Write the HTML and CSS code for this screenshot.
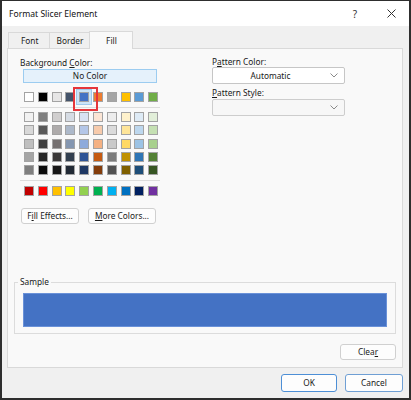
FILE: index.html
```html
<!DOCTYPE html>
<html lang="en">
<head>
  <meta charset="UTF-8" />
  <title>Format Slicer Element</title>
  <link rel="stylesheet" href="styles.css">
</head>
<body>

<div class="window">
  <div class="titlebar">
    <span class="title">Format Slicer Element</span>
    <span class="tb-btn">?</span>
    <span class="tb-btn">
      <svg width="9" height="9" viewBox="0 0 9 9"><path d="M0.5 0.5L8.5 8.5M8.5 0.5L0.5 8.5" stroke="#333" stroke-width="1"/></svg>
    </span>
  </div>

  <div class="body">
    <div class="tabs">
      <div class="tab">Font</div>
      <div class="tab">Border</div>
      <div class="tab active">Fill</div>
    </div>

    <div class="panel">
      <div class="top">
        <div class="col-left">
          <div class="label">Background <u>C</u>olor:</div>
          <div class="no-color">No Color</div>

          <div class="swatch-row theme">
            <span class="sw" style="background:#ffffff"></span>
            <span class="sw" style="background:#000000"></span>
            <span class="sw" style="background:#e7e6e6"></span>
            <span class="sw" style="background:#44546a"></span>
            <span class="sw selected" style="background:#4472c4"></span>
            <span class="sw" style="background:#ed7d31"></span>
            <span class="sw" style="background:#a5a5a5"></span>
            <span class="sw" style="background:#ffc000"></span>
            <span class="sw" style="background:#5b9bd5"></span>
            <span class="sw" style="background:#70ad47"></span>
          </div>
          <div class="sep"></div>

          <div class="swatch-grid">
            <span class="sw" style="background:#f2f2f2"></span>
            <span class="sw" style="background:#7f7f7f"></span>
            <span class="sw" style="background:#d0cece"></span>
            <span class="sw" style="background:#d6dce4"></span>
            <span class="sw" style="background:#d9e2f3"></span>
            <span class="sw" style="background:#fbe5d5"></span>
            <span class="sw" style="background:#ededed"></span>
            <span class="sw" style="background:#fff2cc"></span>
            <span class="sw" style="background:#deebf6"></span>
            <span class="sw" style="background:#e2efd9"></span>

            <span class="sw" style="background:#d8d8d8"></span>
            <span class="sw" style="background:#595959"></span>
            <span class="sw" style="background:#aeabab"></span>
            <span class="sw" style="background:#adb9ca"></span>
            <span class="sw" style="background:#b4c6e7"></span>
            <span class="sw" style="background:#f7cbac"></span>
            <span class="sw" style="background:#dbdbdb"></span>
            <span class="sw" style="background:#fee599"></span>
            <span class="sw" style="background:#bdd7ee"></span>
            <span class="sw" style="background:#c5e0b3"></span>

            <span class="sw" style="background:#bfbfbf"></span>
            <span class="sw" style="background:#3f3f3f"></span>
            <span class="sw" style="background:#757070"></span>
            <span class="sw" style="background:#8496b0"></span>
            <span class="sw" style="background:#8eaadb"></span>
            <span class="sw" style="background:#f4b183"></span>
            <span class="sw" style="background:#c9c9c9"></span>
            <span class="sw" style="background:#ffd965"></span>
            <span class="sw" style="background:#9cc3e5"></span>
            <span class="sw" style="background:#a8d08d"></span>

            <span class="sw" style="background:#a5a5a5"></span>
            <span class="sw" style="background:#262626"></span>
            <span class="sw" style="background:#3a3838"></span>
            <span class="sw" style="background:#323f4f"></span>
            <span class="sw" style="background:#2f5496"></span>
            <span class="sw" style="background:#c55a11"></span>
            <span class="sw" style="background:#7b7b7b"></span>
            <span class="sw" style="background:#bf9000"></span>
            <span class="sw" style="background:#2e75b5"></span>
            <span class="sw" style="background:#538135"></span>

            <span class="sw" style="background:#7f7f7f"></span>
            <span class="sw" style="background:#0c0c0c"></span>
            <span class="sw" style="background:#171616"></span>
            <span class="sw" style="background:#222a35"></span>
            <span class="sw" style="background:#1f3864"></span>
            <span class="sw" style="background:#833c0b"></span>
            <span class="sw" style="background:#525252"></span>
            <span class="sw" style="background:#7f6000"></span>
            <span class="sw" style="background:#1e4e79"></span>
            <span class="sw" style="background:#375623"></span>
          </div>
          <div class="sep"></div>

          <div class="swatch-row standard">
            <span class="sw" style="background:#c00000"></span>
            <span class="sw" style="background:#ff0000"></span>
            <span class="sw" style="background:#ffc000"></span>
            <span class="sw" style="background:#ffff00"></span>
            <span class="sw" style="background:#92d050"></span>
            <span class="sw" style="background:#00b050"></span>
            <span class="sw" style="background:#00b0f0"></span>
            <span class="sw" style="background:#0070c0"></span>
            <span class="sw" style="background:#002060"></span>
            <span class="sw" style="background:#7030a0"></span>
          </div>

          <div class="btn-row">
            <div class="btn fill-effects">F<u>i</u>ll Effects...</div>
            <div class="btn more-colors"><u>M</u>ore Colors...</div>
          </div>
        </div>

        <div class="col-right">
          <div class="label">P<u>a</u>ttern Color:</div>
          <div class="select">
            <span class="select-text">Automatic</span>
            <svg class="chev" width="8" height="5" viewBox="0 0 8 5"><path d="M0.5 0.5L4 4L7.5 0.5" fill="none" stroke="#8a8a8a" stroke-width="1"/></svg>
          </div>
          <div class="label second"><u>P</u>attern Style:</div>
          <div class="select empty">
            <span class="select-text"></span>
            <svg class="chev" width="8" height="5" viewBox="0 0 8 5"><path d="M0.5 0.5L4 4L7.5 0.5" fill="none" stroke="#8a8a8a" stroke-width="1"/></svg>
          </div>
        </div>
      </div>

      <div class="group">
        <div class="group-title">Sample</div>
        <div class="sample"></div>
      </div>

      <div class="btn clear">Clea<u>r</u></div>
    </div>

    <div class="footer">
      <div class="btn dlg ok">OK</div>
      <div class="btn dlg">Cancel</div>
    </div>
  </div>
</div>

</body>
</html>
```

FILE: styles.css
```css
* {
  box-sizing: border-box;
}

body {
  margin: 0;
  padding: 0;
  background: #fff;
  font-family: "Noto Sans", "Liberation Sans", sans-serif;
  font-size: 8.3px;
  color: #1a1a1a;
}

u {
  text-decoration-thickness: 1px;
  text-underline-offset: 1px;
}

.window {
  width: 411px;
  height: 400px;
  display: flex;
  flex-direction: column;
  border: 2px solid #2e2e2e;
  border-top-width: 1px;
  background: #f0f0f0;
}

.titlebar {
  height: 25px;
  flex: none;
  display: flex;
  align-items: center;
  padding: 0 6px 0 7px;
  background: #fff;
}

.title {
  flex: 1;
  font-size: 8.6px;
  color: #111;
}

.tb-btn {
  width: 24px;
  height: 25px;
  display: flex;
  align-items: center;
  justify-content: center;
  font-size: 10px;
  color: #333;
}

.tb-btn + .tb-btn {
  margin-left: 12px;
}

.body {
  flex: 1;
  display: flex;
  flex-direction: column;
  padding: 6px 6px 0 5px;
}

.tabs {
  display: flex;
  height: 16px;
  padding-left: 1px;
  position: relative;
  z-index: 1;
}

.tab {
  height: 16px;
  line-height: 15px;
  padding: 0 11px 0 12px;
  border: 1px solid #d9d9d9;
  border-bottom: none;
  border-right: none;
  background: #f0f0f0;
  color: #1a1a1a;
}

.tab:nth-child(2) {
  width: 40px;
  text-align: center;
  padding: 0;
}

.tab.active {
  width: 44px;
  height: 18px;
  margin-top: -1px;
  padding: 0;
  text-align: center;
  line-height: 17px;
  border-right: 1px solid #d9d9d9;
  background: #f9f9f9;
}

.panel {
  height: 320px;
  flex: none;
  display: flex;
  flex-direction: column;
  padding: 8px 6px 7px 6px;
  background: #f9f9f9;
  border: 1px solid #d9d9d9;
}

.top {
  display: flex;
  padding-left: 6px;
}

.col-left {
  width: 140px;
}

.col-right {
  width: 133px;
  margin-left: 52px;
}

.label {
  height: 12px;
  line-height: 12px;
}

.col-right .label {
  height: 10px;
  line-height: 10px;
}

.col-right .label.second {
  margin-top: 4px;
}

.no-color {
  width: 134px;
  height: 14px;
  margin-left: 3px;
  line-height: 12px;
  text-align: center;
  background: #e5f1fb;
  border: 1px solid #9cccf0;
}

.swatch-row,
.swatch-grid {
  display: grid;
  grid-template-columns: repeat(10, 10px);
  column-gap: 3.8px;
  margin-left: 4px;
}

.swatch-row.theme {
  margin-top: 9px;
}

.swatch-grid {
  margin-top: 4px;
  row-gap: 3.3px;
}

.swatch-row.standard {
  margin-top: 5px;
}

.sw {
  display: block;
  width: 10px;
  height: 10px;
  border: 1px solid #a3a3a3;
}

.sw.selected {
  position: relative;
  box-shadow: 0 0 0 2px #cce4f7, 0 0 0 3px #9fcaec;
}

/* red marker drawn round the picked colour */
.sw.selected::after {
  content: "";
  position: absolute;
  left: -7px;
  top: -6px;
  width: 21px;
  height: 20px;
  border: 2px solid #e5363b;
}

.sep {
  height: 1px;
  margin-top: 5px;
  background: #dcdcdc;
}

.btn {
  height: 16px;
  line-height: 14px;
  text-align: center;
  background: #fdfdfd;
  border: 1px solid #d0d0d0;
  border-radius: 3px;
  color: #1a1a1a;
}

.btn-row {
  display: flex;
  margin-top: 12px;
}

.fill-effects {
  width: 58px;
  margin-left: 1px;
}

.more-colors {
  width: 68px;
  margin-left: 9px;
}

.select {
  height: 17px;
  display: flex;
  align-items: center;
  background: #fff;
  border: 1px solid #c6c6c6;
  border-radius: 2px;
}

.col-right .select.empty {
  margin-top: 1px;
  background: #f7f7f7;
  border-color: #cdcdcd;
}

.select-text {
  flex: 1;
  text-align: center;
  padding-left: 2px;
}

.chev {
  margin: 0 6px 0 4px;
}

.group {
  margin-top: 58px;
  height: 52px;
  border: 1px solid #dcdcdc;
  padding: 0 8px 5px 8px;
}

.group-title {
  width: fit-content;
  height: 12px;
  line-height: 12px;
  margin-top: -7px;
  margin-left: -5px;
  padding: 0 2px;
  background: #f9f9f9;
}

.sample {
  height: 34px;
  margin-top: 5px;
  background: #4472c4;
  border: 1px solid #6a91d8;
}

.clear {
  width: 56px;
  margin-top: auto;
  align-self: flex-end;
}

.footer {
  display: flex;
  justify-content: flex-end;
  gap: 8px;
  margin-top: 6px;
}

.dlg {
  height: 18px;
  line-height: 16px;
  border-color: #4d8fd6;
}

.ok {
  width: 56px;
}

.dlg + .dlg {
  width: 58px;
  border-color: #6f9fd4;
}
```
